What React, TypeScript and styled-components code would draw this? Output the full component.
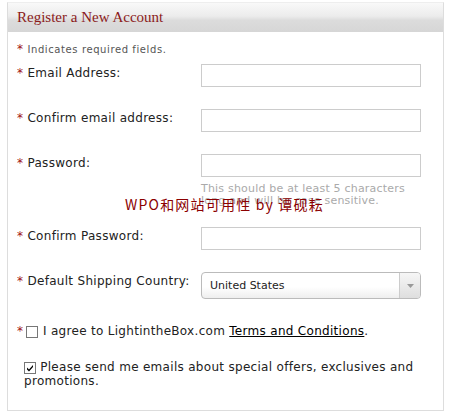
import React from 'react'
import styled, {createGlobalStyle} from 'styled-components'

const GlobalStyle = createGlobalStyle`
  html, body {
    margin: 0;
    padding: 0;
    background: #fff;
  }
  body {
    font-family: "DejaVu Sans", Verdana, sans-serif;
    color: #333;
  }
`

interface IField {
  label: string
  hint?: string
}

const fields: IField[] = [
  {label: 'Email Address:'},
  {label: 'Confirm email address:'},
  {label: 'Password:', hint: 'This should be at least 5 characters long and will be case sensitive.'},
  {label: 'Confirm Password:'},
]

export default function App() {
  return (
    <Page>
      <GlobalStyle />
      <Panel>
        <Header>
          <Title>Register a New Account</Title>
        </Header>
        <Body>
          <Required><Star>*</Star> Indicates required fields.</Required>
          {fields.map(f =>
            <Row key={f.label} hasHint={!!f.hint}>
              <Label><Star>*</Star> {f.label}</Label>
              <Field>
                <Input />
                {f.hint && <Hint>{f.hint}</Hint>}
              </Field>
            </Row>,
          )}
          <Row>
            <Label><Star>*</Star> Default Shipping Country:</Label>
            <Field>
              <Select>
                <SelectText>United States</SelectText>
                <SelectArrow>
                  <svg width="7" height="4" viewBox="0 0 7 4"><path d="M0 0h7L3.5 4z" fill="#999" /></svg>
                </SelectArrow>
              </Select>
            </Field>
          </Row>
          <CheckRow>
            <Star>*</Star>
            <Box />
            <CheckText>I agree to LightintheBox.com <Link>Terms and Conditions</Link>.</CheckText>
          </CheckRow>
          <CheckRow indent>
            <CheckText>
              <Box checked>
                <svg width="8" height="8" viewBox="0 0 8 8"><path d="M1 3.5l2 2 4-4.5v2l-4 4.5-2-2z" fill="#000" /></svg>
              </Box>
              {' '}Please send me emails about special offers, exclusives and promotions.
            </CheckText>
          </CheckRow>
        </Body>
      </Panel>
      <Watermark>WPO和网站可用性 by 谭砚耘</Watermark>
    </Page>
  )
}

const Page = styled.div`
  position: relative;
  width: 450px;
  height: 413px;
  padding-top: 2px;
  box-sizing: border-box;
`

const Panel = styled.div`
  margin-left: 7px;
  width: 437px;
  border: 1px solid #ddd;
  border-top-color: #eee;
  box-sizing: border-box;
`

const Header = styled.div`
  height: 29px;
  display: flex;
  align-items: center;
  padding-left: 9px;
  background: linear-gradient(#f9f9f9 0%, #ececec 45%, #dcdcdc 60%, #d6d6d6 100%);
`

const Title = styled.h2`
  margin: 0;
  font-family: "Liberation Serif", Georgia, serif;
  font-size: 15px;
  font-weight: normal;
  color: #8b1a1a;
`

const Body = styled.div`
  padding: 10px 0 22px 9px;
`

const Star = styled.span`
  color: #a01010;
  font-size: 12px;
`

const Required = styled.div`
  font-size: 10px;
  color: #555;
  margin-bottom: 8px;
  letter-spacing: 0.6px;
`

const Row = styled.div<{hasHint?: boolean}>`
  display: flex;
  align-items: flex-start;
  margin-bottom: ${p => (p.hasHint ? '20px' : '22px')};
`

const Label = styled.label`
  width: 184px;
  flex: none;
  padding-top: 2px;
  font-size: 12px;
  letter-spacing: 0.3px;
  color: #222;
`

const Field = styled.div`
  width: 220px;
`

const Input = styled.input`
  display: block;
  width: 220px;
  height: 23px;
  margin: 0;
  border: 1px solid #ccc;
  box-sizing: border-box;
  background: #fff;
`

const Hint = styled.div`
  max-width: 210px;
  margin-top: 6px;
  font-size: 11px;
  line-height: 12px;
  color: #aaa;
  letter-spacing: 0.2px;
`

const Select = styled.div`
  display: flex;
  width: 220px;
  height: 27px;
  border: 1px solid #bbb;
  border-radius: 4px;
  box-sizing: border-box;
  background: linear-gradient(#fff 0%, #fff 55%, #eee 100%);
  overflow: hidden;
`

const SelectText = styled.div`
  flex: 1;
  display: flex;
  align-items: center;
  padding-left: 8px;
  font-size: 11px;
  color: #222;
`

const SelectArrow = styled.div`
  width: 20px;
  display: flex;
  align-items: center;
  justify-content: center;
  border-left: 1px solid #ccc;
  background: linear-gradient(#f6f6f6, #dedede);
`

const CheckRow = styled.div<{indent?: boolean}>`
  display: flex;
  align-items: flex-start;
  gap: 3px;
  margin-top: ${p => (p.indent ? '22px' : '25px')};
  padding-left: ${p => (p.indent ? '5px' : '0')};
  padding-right: 20px;
`

const Box = styled.span<{checked?: boolean}>`
  display: inline-flex;
  align-items: center;
  justify-content: center;
  width: 12px;
  height: 12px;
  margin-top: 2px;
  border: 1px solid #777;
  box-sizing: border-box;
  background: #fff;
  vertical-align: -1px;
  flex: none;
`

const CheckText = styled.div`
  font-size: 12px;
  line-height: 14px;
  letter-spacing: 0.3px;
  color: #222;
  padding-left: 2px;
`

const Link = styled.a`
  color: #000;
  text-decoration: underline;
`

const Watermark = styled.div`
  position: absolute;
  left: 125px;
  top: 194px;
  font-family: "Noto Sans CJK SC", sans-serif;
  font-size: 14px;
  color: #8b0000;
  letter-spacing: 1.2px;
  white-space: nowrap;
`
